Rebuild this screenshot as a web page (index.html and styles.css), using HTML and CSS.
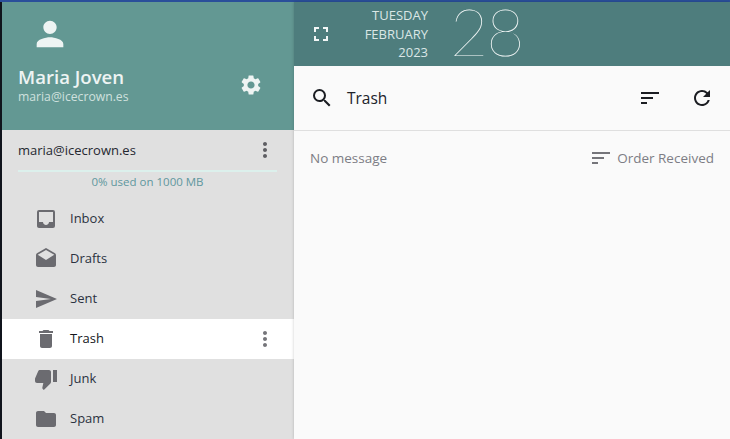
FILE: index.html
```html
<!DOCTYPE html>
<html lang="en">
<head>
<meta charset="utf-8">
<title>Mail</title>
<link rel="stylesheet" href="styles.css">
</head>
<body>
<div class="topline"></div>
<div class="app">
  <aside class="sidebar">
    <header class="profile">
      <svg class="avatar" viewBox="0 0 24 24"><path d="M12 12c2.21 0 4-1.79 4-4s-1.79-4-4-4-4 1.79-4 4 1.79 4 4 4zm0 2c-2.67 0-8 1.34-8 4v2h16v-2c0-2.66-5.33-4-8-4z"/></svg>
      <div class="profile-row">
        <div>
          <div class="name">Maria Joven</div>
          <div class="mail">maria@icecrown.es</div>
        </div>
        <svg class="gear" viewBox="0 0 24 24"><path d="M19.14 12.94c.04-.3.06-.61.06-.94 0-.32-.02-.64-.07-.94l2.03-1.58a.49.49 0 0 0 .12-.61l-1.92-3.32a.488.488 0 0 0-.59-.22l-2.39.96c-.5-.38-1.03-.7-1.62-.94l-.36-2.54a.484.484 0 0 0-.48-.41h-3.84c-.24 0-.43.17-.47.41l-.36 2.54c-.59.24-1.13.57-1.62.94l-2.39-.96c-.22-.08-.47 0-.59.22L2.74 8.87c-.12.21-.08.47.12.61l2.03 1.58c-.05.3-.09.63-.09.94s.02.64.07.94l-2.03 1.58a.49.49 0 0 0-.12.61l1.92 3.32c.12.22.37.29.59.22l2.39-.96c.5.38 1.03.7 1.62.94l.36 2.54c.05.24.24.41.48.41h3.84c.24 0 .44-.17.47-.41l.36-2.54c.59-.24 1.13-.56 1.62-.94l2.39.96c.22.08.47 0 .59-.22l1.92-3.32c.12-.22.07-.47-.12-.61l-2.01-1.58zM12 15.6c-1.98 0-3.6-1.62-3.6-3.6s1.62-3.6 3.6-3.6 3.6 1.62 3.6 3.6-1.62 3.6-3.6 3.6z"/></svg>
      </div>
    </header>
    <section class="account">
      <div class="account-row">
        <span class="account-name">maria@icecrown.es</span>
        <svg class="dots dark" viewBox="0 0 24 24"><path d="M12 8c1.1 0 2-.9 2-2s-.9-2-2-2-2 .9-2 2 .9 2 2 2zm0 2c-1.1 0-2 .9-2 2s.9 2 2 2 2-.9 2-2-.9-2-2-2zm0 6c-1.1 0-2 .9-2 2s.9 2 2 2 2-.9 2-2-.9-2-2-2z"/></svg>
      </div>
      <div class="quota-bar"></div>
      <div class="quota">0% used on 1000 MB</div>
    </section>
    <nav class="folders">
      <a class="folder"><svg class="ficon" viewBox="0 0 24 24"><path d="M19 3H5a2 2 0 0 0-2 2v14c0 1.1.9 2 2 2h14a2 2 0 0 0 2-2V5a2 2 0 0 0-2-2zm0 12h-4c0 1.66-1.35 3-3 3s-3-1.34-3-3H5V5h14v10z"/></svg><span>Inbox</span></a>
      <a class="folder"><svg class="ficon" viewBox="0 0 24 24"><path d="M21.99 8c0-.72-.37-1.35-.94-1.7L12 1 2.95 6.3C2.38 6.65 2 7.28 2 8v10c0 1.1.9 2 2 2h16c1.1 0 2-.9 2-2l-.01-10zM12 13 3.74 7.84 12 3l8.26 4.84L12 13z"/></svg><span>Drafts</span></a>
      <a class="folder"><svg class="ficon" viewBox="0 0 24 24"><path d="M2.01 21 23 12 2.01 3 2 10l15 2-15 2z"/></svg><span>Sent</span></a>
      <a class="folder active"><svg class="ficon" viewBox="0 0 24 24"><path d="M6 19c0 1.1.9 2 2 2h8c1.1 0 2-.9 2-2V7H6v12zM19 4h-3.5l-1-1h-5l-1 1H5v2h14V4z"/></svg><span class="grow">Trash</span><svg class="dots" viewBox="0 0 24 24"><path d="M12 8c1.1 0 2-.9 2-2s-.9-2-2-2-2 .9-2 2 .9 2 2 2zm0 2c-1.1 0-2 .9-2 2s.9 2 2 2 2-.9 2-2-.9-2-2-2zm0 6c-1.1 0-2 .9-2 2s.9 2 2 2 2-.9 2-2-.9-2-2-2z"/></svg></a>
      <a class="folder"><svg class="ficon" viewBox="0 0 24 24"><path d="M15 3H6c-.83 0-1.54.5-1.84 1.22l-3.02 7.05c-.09.23-.14.47-.14.73v2c0 1.1.9 2 2 2h6.31l-.95 4.57-.03.32c0 .41.17.79.44 1.06L9.83 23l6.59-6.59c.36-.36.58-.86.58-1.41V5c0-1.1-.9-2-2-2zm4 0v12h4V3h-4z"/></svg><span>Junk</span></a>
      <a class="folder"><svg class="ficon" viewBox="0 0 24 24"><path d="M10 4H4c-1.1 0-1.99.9-1.99 2L2 18c0 1.1.9 2 2 2h16c1.1 0 2-.9 2-2V8c0-1.1-.9-2-2-2h-8l-2-2z"/></svg><span>Spam</span></a>
    </nav>
  </aside>
  <main class="content">
    <header class="datebar">
      <svg class="full" viewBox="0 0 24 24"><path d="M7 14H5v5h5v-2H7v-3zm-2-4h2V7h3V5H5v5zm12 7h-3v2h5v-5h-2v3zM14 5v2h3v3h2V5h-5z"/></svg>
      <div class="datetext"><div>TUESDAY</div><div>FEBRUARY</div><div>2023</div></div>
      <div class="daynum">28</div>
    </header>
    <div class="search">
      <svg class="sicon" viewBox="0 0 24 24"><path d="M15.5 14h-.79l-.28-.27A6.47 6.47 0 0 0 16 9.5 6.5 6.5 0 1 0 9.5 16c1.61 0 3.09-.59 4.23-1.57l.27.28v.79l5 4.99L20.49 19l-4.99-5zm-6 0C7.01 14 5 11.99 5 9.5S7.01 5 9.5 5 14 7.01 14 9.5 11.99 14 9.5 14z"/></svg>
      <span class="title">Trash</span>
      <svg class="sicon right" viewBox="0 0 24 24"><path d="M3 18h6v-2H3v2zM3 6v2h18V6H3zm0 7h12v-2H3v2z"/></svg>
      <svg class="sicon right2" viewBox="0 0 24 24"><path d="M17.65 6.35A7.958 7.958 0 0 0 12 4c-4.42 0-7.99 3.58-7.99 8s3.57 8 7.99 8c3.73 0 6.84-2.55 7.73-6h-2.08A5.99 5.99 0 0 1 12 18c-3.31 0-6-2.69-6-6s2.69-6 6-6c1.66 0 3.14.69 4.22 1.78L13 11h7V4l-2.35 2.35z"/></svg>
    </div>
    <div class="listhead">
      <span class="nomsg">No message</span>
      <svg class="sort" viewBox="0 0 24 24"><path d="M3 18h6v-2H3v2zM3 6v2h18V6H3zm0 7h12v-2H3v2z"/></svg>
      <span class="order">Order Received</span>
    </div>
  </main>
</div>
</body>
</html>
```
FILE: styles.css
```css
* { box-sizing: border-box; }
html, body { margin: 0; height: 100%; overflow: hidden; }
body { width: 730px; height: 439px; font-family: "Open Sans", "Noto Sans", sans-serif; background: #fafafa; }
.topline { height: 2px; background: #2a4f9a; }
.app { display: flex; height: 437px; padding-left: 2px; background: linear-gradient(#10141c, #10141c) left / 2px 100% no-repeat; }
.sidebar { width: 292px; flex: none; background: #e0e0e0; overflow: hidden; }
.profile { height: 128px; background: #639893; padding: 12px 16px 0; color: #eef4f3; }
.avatar { display: block; width: 40px; height: 40px; margin-left: 12px; fill: #eef4f3; }
.profile-row { display: flex; justify-content: space-between; align-items: center; margin-top: 11px; padding-right: 15px; }
.name { font-size: 18.6px; font-weight: 600; line-height: 24px; }
.mail { font-size: 12.2px; line-height: 15px; color: #cfe0de; }
.gear { width: 24px; height: 24px; fill: #eef4f3; margin-top: 1px; }
.account { height: 69px; padding: 9px 16px 0; }
.account-row { display: flex; justify-content: space-between; align-items: center; height: 22px; }
.account-name { font-size: 13px; color: #252830; }
.dots { width: 24px; height: 24px; fill: #75757a; flex: none; margin-right: 1px; }
.dots.dark { fill: #5e5e63; }
.quota-bar { height: 2px; background: #dcf0ec; margin: 9px 0 0; width: 259px; }
.quota { font-size: 11.5px; text-align: center; color: #5f979e; line-height: 18px; margin-top: 1px; width: 259px; }
.folder { display: flex; align-items: center; height: 40px; padding: 0 16px 0 32px; font-size: 13px; color: #2b3240; }
.folder span { margin-bottom: 2px; }
.folder.active { background: #fff; color: #14161c; }
.folder .grow { flex: 1; }
.ficon { width: 24px; height: 24px; fill: #6b6b70; flex: none; margin-right: 12px; }
.content { flex: 1; min-width: 0; background: #fafafa; box-shadow: 0 0 3px rgba(0,0,0,.2); }
.datebar { display: flex; align-items: center; height: 64px; background: #4e7d7d; padding-left: 15px; color: #dfeaea; }
.full { width: 24px; height: 24px; fill: #f2f6f6; flex: none; }
.datetext { width: 95px; text-align: right; font-size: 13px; line-height: 18.5px; color: #dbe7e6; }
.daynum { align-self: flex-start; height: 64px; font-family: "Lato", sans-serif; font-weight: 100; font-size: 66px; line-height: 80px; margin-top: -11px; margin-left: 22px; letter-spacing: -2px; color: #f4f8f8; }
.search { display: flex; align-items: center; height: 65px; padding: 0 16px; border-bottom: 1px solid #dfdfdf; background: #fafafa; }
.sicon { width: 24px; height: 24px; fill: #1b1d22; flex: none; }
.title { font-size: 15.5px; margin-left: 13px; flex: 1; color: #20232a; }
.right { margin-right: 28px; }
.listhead { display: flex; align-items: center; height: 54px; padding: 0 16px; font-size: 13.5px; color: #7d7d85; }
.nomsg { flex: 1; }
.sort { width: 24px; height: 24px; fill: #75757a; margin-right: 4px; }
```
